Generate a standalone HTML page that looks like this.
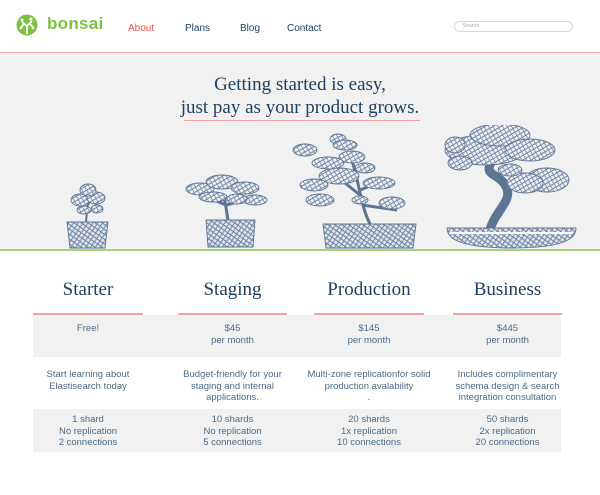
<!DOCTYPE html>
<html><head><meta charset="utf-8"><style>
*{margin:0;padding:0;box-sizing:border-box}
body{width:600px;height:495px;background:#fff;font-family:"Liberation Sans",sans-serif;position:relative;overflow:hidden;color:#1f4060}
.a{position:absolute}
.nav{font-size:10px;top:23px;color:#1f4060}
.serif{font-family:"Liberation Serif",serif}
.col{position:absolute;text-align:center;font-size:9.5px;color:#4d6a86;line-height:11.5px}
.h{font-family:"Liberation Serif",serif;font-size:19px;color:#1f4060;text-align:center;position:absolute;top:279px}
.ul{position:absolute;top:313px;height:2px;background:#f2a49e}
</style></head><body>
<svg class="a" style="left:16px;top:14px" width="22" height="22" viewBox="0 0 22 22"><circle cx="11" cy="11" r="10.5" fill="#7dc242"/><path d="M11 20V12M11 12L6 8M11 12L16 7M8 10L5 13M14 10l3 3" stroke="#fff" stroke-width="1.8" fill="none"/><circle cx="6" cy="6" r="1.5" fill="#fff"/><circle cx="15" cy="5" r="1.5" fill="#fff"/><circle cx="5" cy="14" r="1.3" fill="#fff"/><circle cx="17" cy="14" r="1.3" fill="#fff"/></svg>
<div class="a" style="left:47px;top:14px;font-size:17px;font-weight:bold;color:#7dc242;letter-spacing:0.3px">bonsai</div>
<div class="a nav" style="left:128px;color:#e9524f">About</div>
<div class="a nav" style="left:185px">Plans</div>
<div class="a nav" style="left:240px">Blog</div>
<div class="a nav" style="left:287px">Contact</div>
<div class="a" style="left:454px;top:21px;width:119px;height:11px;border:1px solid #d8d8d8;border-radius:6px;font-size:5.5px;color:#aaa;padding:1px 0 0 7px">Search</div>
<div class="a" style="left:0;top:52px;width:600px;height:198px;background:#f1f1f1;border-top:1px solid #f2a49e"></div>
<div class="a serif" style="left:0;top:73px;width:600px;text-align:center;font-size:19px;line-height:23px;color:#1f4060">Getting started is easy,<br>just pay as your product grows.</div>
<div class="a" style="left:184px;top:120px;width:236px;height:1px;background:#f2a49e"></div>
<svg class="a" style="left:0;top:125px" width="600" height="125" viewBox="0 125 600 125" stroke="#5d7594" stroke-width="0.9">
<defs><pattern id="hp" width="4" height="4" patternUnits="userSpaceOnUse" patternTransform="rotate(35)"><rect width="4" height="4" fill="#dfe4ec"/><line x1="0" y1="0" x2="0" y2="4" stroke="#8597b0" stroke-width="1.1"/></pattern>
<pattern id="fp" width="4" height="4" patternUnits="userSpaceOnUse" patternTransform="rotate(-30)"><rect width="4" height="4" fill="#eef0f4"/><line x1="0" y1="0" x2="0" y2="4" stroke="#c3ccd9" stroke-width="0.7"/></pattern></defs>
<g fill="url(#fp)">
<path d="M86 222 L88 200 M88 205 l-8 -10 M88 205 l7 -12" fill="none" stroke-width="2"/>
<ellipse cx="80" cy="200" rx="9" ry="6"/><ellipse cx="96" cy="198" rx="9" ry="6"/><ellipse cx="88" cy="190" rx="8" ry="6"/><ellipse cx="84" cy="210" rx="7" ry="4"/><ellipse cx="97" cy="209" rx="6" ry="4"/>
<path d="M228 220 l-4 -25 M226 205 l-12 -5 M226 205 l12 -3" fill="none" stroke-width="3"/>
<ellipse cx="200" cy="189" rx="14" ry="6"/><ellipse cx="222" cy="182" rx="16" ry="7"/><ellipse cx="245" cy="188" rx="14" ry="6"/><ellipse cx="255" cy="200" rx="12" ry="5"/><ellipse cx="213" cy="197" rx="14" ry="5"/><ellipse cx="237" cy="199" rx="10" ry="5"/>
<path d="M370 224 c-10 -20 -10 -40 -20 -70 M360 195 l-25 -20 M360 190 l25 -10 M362 205 l35 5" fill="none" stroke-width="3"/>
<ellipse cx="339" cy="176" rx="20" ry="8"/><ellipse cx="352" cy="157" rx="13" ry="6"/><ellipse cx="379" cy="183" rx="16" ry="6"/><ellipse cx="360" cy="200" rx="8" ry="4"/><ellipse cx="392" cy="203" rx="13" ry="6"/><ellipse cx="305" cy="150" rx="12" ry="6"/><ellipse cx="314" cy="185" rx="14" ry="6"/><ellipse cx="320" cy="200" rx="14" ry="6"/><ellipse cx="338" cy="139" rx="8" ry="5"/><ellipse cx="345" cy="145" rx="12" ry="5"/><ellipse cx="328" cy="163" rx="16" ry="6"/><ellipse cx="365" cy="168" rx="10" ry="5"/>
<path d="M490 230 c5 -20 25 -30 15 -45 c-5 -10 -20 -10 -15 -20 l10 -20" fill="none" stroke-width="9"/>
<ellipse cx="485" cy="150" rx="40" ry="15"/><ellipse cx="500" cy="135" rx="30" ry="11"/><ellipse cx="530" cy="150" rx="25" ry="11"/><ellipse cx="547" cy="180" rx="22" ry="12"/><ellipse cx="525" cy="183" rx="18" ry="10"/><ellipse cx="460" cy="163" rx="12" ry="7"/><ellipse cx="455" cy="145" rx="10" ry="8"/><ellipse cx="510" cy="170" rx="12" ry="6"/>
</g>
<path d="M67 222 h41 l-3 26 h-35z" fill="url(#hp)"/>
<path d="M206 220 h49 l-2 27 h-45z" fill="url(#hp)"/>
<path d="M323 224 h93 l-3 24 h-87z" fill="url(#hp)"/>
<path d="M447 228 h129 c0 10 -10 20 -64 20 c-54 0 -65 -10 -65 -20z" fill="url(#hp)"/>
<path d="M450 233 h123" stroke="#fff" stroke-width="2"/>
</svg>
<div class="a" style="left:0;top:249px;width:600px;height:2px;background:#a9d37a"></div>
<div class="a" style="left:33px;top:315px;width:528px;height:42px;background:#f1f1f1"></div>
<div class="a" style="left:33px;top:409px;width:528px;height:43px;background:#f1f1f1"></div>
<div class="h" style="left:33px;width:110px">Starter</div>
<div class="h" style="left:178px;width:109px">Staging</div>
<div class="h" style="left:309px;width:120px">Production</div>
<div class="h" style="left:453px;width:109px">Business</div>
<div class="ul" style="left:33px;width:110px"></div>
<div class="ul" style="left:178px;width:109px"></div>
<div class="ul" style="left:314px;width:110px"></div>
<div class="ul" style="left:453px;width:109px"></div>
<div class="col" style="left:33px;width:110px;top:323px">Free!</div>
<div class="col" style="left:178px;width:109px;top:323px">$45<br>per month</div>
<div class="col" style="left:309px;width:120px;top:323px">$145<br>per month</div>
<div class="col" style="left:453px;width:109px;top:323px">$445<br>per month</div>
<div class="col" style="left:33px;width:110px;top:369px">Start learning about<br>Elastisearch today</div>
<div class="col" style="left:170px;width:125px;top:369px">Budget-friendly for your<br>staging and internal<br>applications.</div>
<div class="col" style="left:299px;width:140px;top:369px">Multi-zone replicationfor solid<br>production avalability<br>.</div>
<div class="col" style="left:445px;width:125px;top:369px">Includes complimentary<br>schema design &amp; search<br>integration consultation</div>
<div class="col" style="left:33px;width:110px;top:414px">1 shard<br>No replication<br>2 connections</div>
<div class="col" style="left:178px;width:109px;top:414px">10 shards<br>No replication<br>5 connections</div>
<div class="col" style="left:309px;width:120px;top:414px">20 shards<br>1x replication<br>10 connections</div>
<div class="col" style="left:453px;width:109px;top:414px">50 shards<br>2x replication<br>20 connections</div>
</body></html>
